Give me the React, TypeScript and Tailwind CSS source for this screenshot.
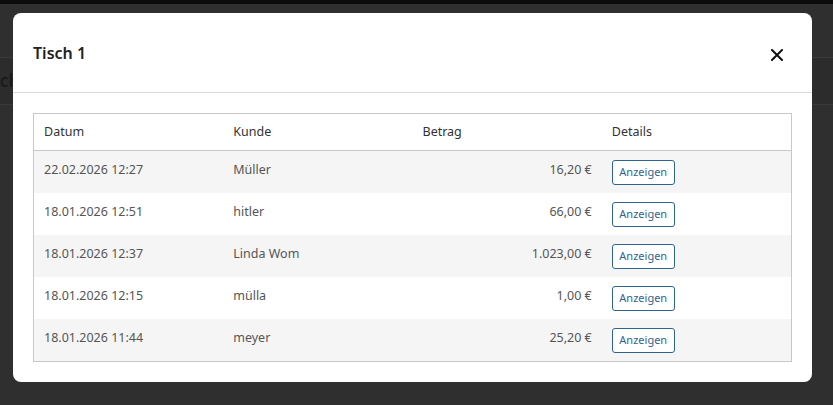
import { JSX } from "react"

const rows = [
    { datum: "22.02.2026 12:27", kunde: "Müller", betrag: "16,20 €" },
    { datum: "18.01.2026 12:51", kunde: "hitler", betrag: "66,00 €" },
    { datum: "18.01.2026 12:37", kunde: "Linda Wom", betrag: "1.023,00 €" },
    { datum: "18.01.2026 12:15", kunde: "mülla", betrag: "1,00 €" },
    { datum: "18.01.2026 11:44", kunde: "meyer", betrag: "25,20 €" },
]

export default function App(): JSX.Element {
    return (
        <div id="page" className="relative w-[833px] h-[405px] overflow-hidden bg-[#2f2f2f] font-['Noto_Sans','Open_Sans',sans-serif]">
            <div className="h-[4px] bg-[#0b0b0b]" />
            <Backdrop />
            <Modal />
        </div>
    )
}

export function Backdrop(): JSX.Element {
    return (
        <div id="backdrop" className="flex flex-col">
            <div className="h-[53px]" />
            <div className="h-[48px] border-y border-[#3a3a3a] bg-[#2c2c2c] flex items-center -ml-[23px]">
                <span className="text-[17px] font-semibold text-[#1a1a1a]">Tisch</span>
            </div>
        </div>
    )
}

export function Modal(): JSX.Element {
    return (
        <div id="modal" className="absolute left-[13px] top-[13px] w-[799px] h-[369px] bg-white rounded-[8px] flex flex-col">
            <div className="h-[80px] border-b border-[#dcdcdc] flex items-center justify-between pl-[20px] pr-[29px]">
                <h1 className="text-[16px] font-semibold text-[#222] pt-[1px]">Tisch 1</h1>
                <CloseIcon />
            </div>
            <div className="px-[20px] pt-[20px]">
                <Table />
            </div>
        </div>
    )
}

export function CloseIcon(): JSX.Element {
    return (
        <svg width="12" height="12" viewBox="0 0 12 12" className="mt-[4px]">
            <path d="M1 1 L11 11 M11 1 L1 11" stroke="#111" strokeWidth="2" strokeLinecap="square" />
        </svg>
    )
}

export function Table(): JSX.Element {
    return (
        <div id="table" className="border border-[#c8c8c8] text-[12.5px]">
            <div className="grid grid-cols-4 h-[37px] items-center border-b border-[#c8c8c8] text-[#333]">
                <div className="px-[10px]">Datum</div>
                <div className="px-[10px]">Kunde</div>
                <div className="px-[10px]">Betrag</div>
                <div className="px-[10px]">Details</div>
            </div>
            {rows.map((r, i) => (
                <div key={i} className={`grid grid-cols-4 h-[42px] items-center text-[#555] ${i % 2 === 0 ? "bg-[#f5f5f5]" : "bg-white"}`}>
                    <div className="px-[10px] -mt-[3px]">{r.datum}</div>
                    <div className="px-[10px] -mt-[3px]">{r.kunde}</div>
                    <div className="px-[10px] text-right -mt-[3px]">{r.betrag}</div>
                    <div className="px-[10px]">
                        <button className="h-[25px] w-[63px] border border-[#2f6491] rounded-[3px] bg-white text-[11px] text-[#2f6491]">Anzeigen</button>
                    </div>
                </div>
            ))}
        </div>
    )
}
